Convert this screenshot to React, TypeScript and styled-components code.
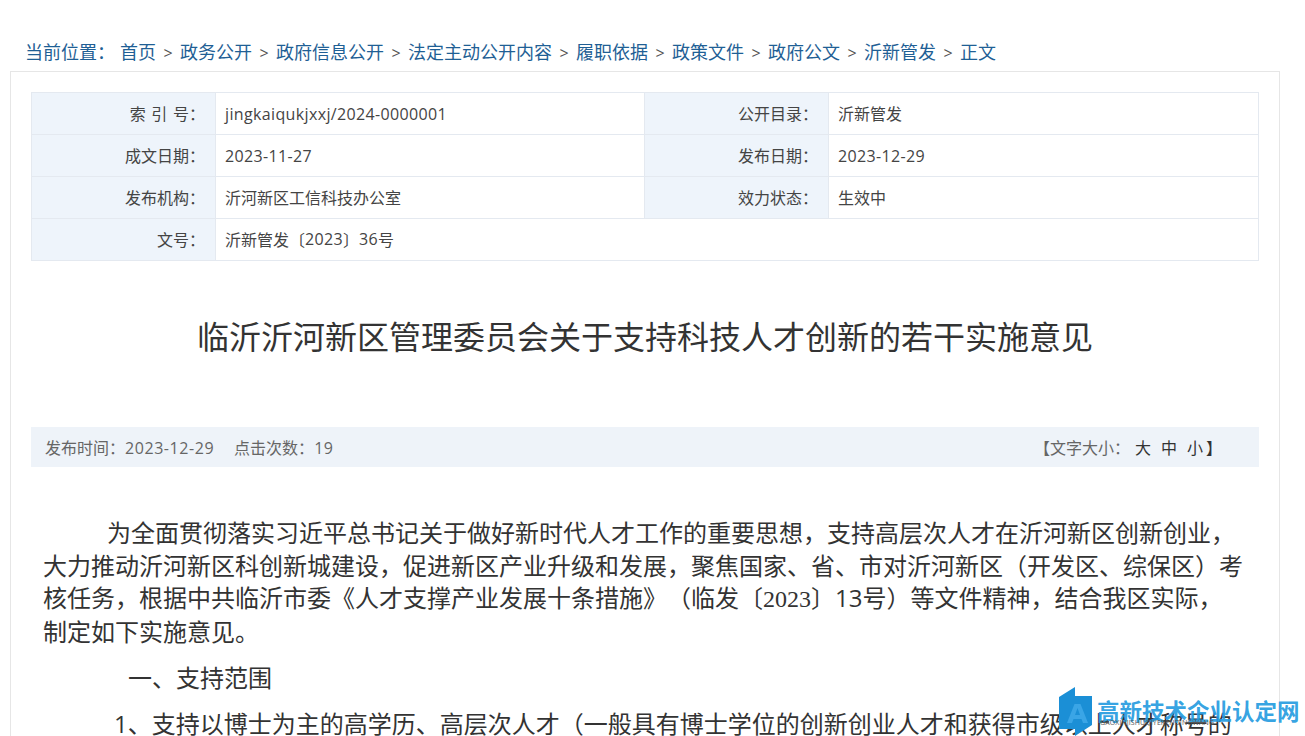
import styled, { createGlobalStyle } from "styled-components";

const cjk = `"Open Sans", "Noto Sans CJK SC", sans-serif`;

const GlobalStyle = createGlobalStyle`
  html, body {
    margin: 0;
    height: 736px;
    overflow: hidden;
    background: #fff;
  }
  body {
    font-family: ${cjk};
    color: #333;
    text-spacing-trim: space-all;
  }
`;

const Page = styled.div`
  padding: 40px 25px 0 10px;
`;

const Crumbs = styled.nav`
  display: flex;
  align-items: center;
  height: 21px;
  margin: 0 0 10px 15px;
  font-size: 18px;
  color: #1f5f95;
  white-space: nowrap;
`;

const CrumbLabel = styled.span`
  margin-right: 5px;
`;

const CrumbSep = styled.span`
  display: inline-block;
  width: 24px;
  text-align: center;
  font-size: 16px;
  color: #555;
`;

const Panel = styled.main`
  border: 1px solid #e6e6e6;
  border-bottom: 0;
  padding: 20px 20px 0;
`;

const InfoTable = styled.div`
  display: grid;
  grid-template-columns: 184px 429px 184px 1fr;
  grid-auto-rows: 42px;
  border-top: 1px solid #e4e9f0;
  border-left: 1px solid #e4e9f0;
`;

const InfoLabel = styled.div`
  display: flex;
  align-items: center;
  justify-content: flex-end;
  padding: 0 10px 2px 0;
  font-size: 16px;
  color: #444;
  background: #eef4fb;
  border-right: 1px solid #e4e9f0;
  border-bottom: 1px solid #e4e9f0;
  white-space: pre;
  word-spacing: 1.5px;
`;

const InfoValue = styled.div<{ $span?: number }>`
  display: flex;
  align-items: center;
  padding: 0 0 2px 9px;
  font-size: 16px;
  color: #444;
  grid-column: span ${(props) => props.$span ?? 1};
  border-right: 1px solid #e4e9f0;
  border-bottom: 1px solid #e4e9f0;
  white-space: pre;
`;

const LatinValue = styled(InfoValue)`
  padding-bottom: 0;
`;

const Latin = styled.span`
  letter-spacing: 0.36px;
`;

const MetaLatin = styled.span`
  letter-spacing: 0.56px;
`;

const Title = styled.h1`
  margin: 50px 0 62px;
  height: 54px;
  font-size: 32px;
  line-height: 52px;
  font-weight: 400;
  text-align: center;
  color: #333;
`;

const MetaBar = styled.div`
  display: flex;
  align-items: center;
  justify-content: space-between;
  height: 40px;
  padding: 0 37px 0 14px;
  font-size: 16px;
  color: #666;
  background: #eef3f9;
`;

const MetaGroup = styled.div`
  display: flex;
  gap: 20px;
`;

const SizeSwitch = styled.div`
  display: flex;
  align-items: center;
`;

const SizeOption = styled.span<{ $gap: number }>`
  margin-left: ${(props) => props.$gap}px;
  color: #333;
`;

const Article = styled.article`
  margin-top: 50px;
  padding: 0 15px 0 12px;
`;

const Paragraph = styled.p<{ $indent: number }>`
  margin: 0 0 13.5px;
  font-size: 24px;
  line-height: 32.5px;
  color: #333;
  text-indent: ${(props) => props.$indent}px;
`;

const SerifNum = styled.span`
  font-family: "Liberation Serif", serif;
`;

const SiteMark = styled.div`
  position: absolute;
  left: 1059px;
  top: 687px;
  width: 246px;
  height: 49px;
  overflow: hidden;
`;

const MarkIcon = styled.svg`
  position: absolute;
  left: 0;
  top: 0;
`;

const MarkName = styled.div`
  position: absolute;
  left: 38px;
  top: 12px;
  font-size: 22.5px;
  line-height: 26px;
  font-weight: 700;
  color: rgba(36, 155, 224, 0.92);
  white-space: nowrap;
`;

const MarkSub = styled.div`
  position: absolute;
  left: 41px;
  top: 32px;
  font-size: 7px;
  line-height: 8px;
  color: #555;
  letter-spacing: 0.1px;
  white-space: nowrap;
`;

const crumbs = ["首页", "政务公开", "政府信息公开", "法定主动公开内容", "履职依据", "政策文件", "政府公文", "沂新管发", "正文"];

export default function App() {
  return (
    <Page>
      <GlobalStyle />
      <Crumbs>
        <CrumbLabel>当前位置：</CrumbLabel>
        {crumbs.map((c, i) => (
          <span key={c}>
            {c}
            {i < crumbs.length - 1 && <CrumbSep>&gt;</CrumbSep>}
          </span>
        ))}
      </Crumbs>
      <Panel>
        <InfoTable>
          <InfoLabel>索 引 号：</InfoLabel>
          <LatinValue><Latin>jingkaiqukjxxj/2024-0000001</Latin></LatinValue>
          <InfoLabel>公开目录：</InfoLabel>
          <InfoValue>沂新管发</InfoValue>
          <InfoLabel>成文日期：</InfoLabel>
          <LatinValue><Latin>2023-11-27</Latin></LatinValue>
          <InfoLabel>发布日期：</InfoLabel>
          <LatinValue><Latin>2023-12-29</Latin></LatinValue>
          <InfoLabel>发布机构：</InfoLabel>
          <InfoValue>沂河新区工信科技办公室</InfoValue>
          <InfoLabel>效力状态：</InfoLabel>
          <InfoValue>生效中</InfoValue>
          <InfoLabel>文号：</InfoLabel>
          <InfoValue $span={3}>沂新管发〔<Latin>2023</Latin>〕<Latin>36</Latin>号</InfoValue>
        </InfoTable>
        <Title>临沂沂河新区管理委员会关于支持科技人才创新的若干实施意见</Title>
        <MetaBar>
          <MetaGroup>
            <span>发布时间：<MetaLatin>2023-12-29</MetaLatin></span>
            <span>点击次数：<MetaLatin>19</MetaLatin></span>
          </MetaGroup>
          <SizeSwitch>
            【文字大小：
            <SizeOption $gap={5}>大</SizeOption>
            <SizeOption $gap={10}>中</SizeOption>
            <SizeOption $gap={10}>小</SizeOption>
            <SizeOption $gap={3}>】</SizeOption>
          </SizeSwitch>
        </MetaBar>
        <Article>
          <Paragraph $indent={64}>
            为全面贯彻落实习近平总书记关于做好新时代人才工作的重要思想，支持高层次人才在沂河新区创新创业，大力推动沂河新区科创新城建设，促进新区产业升级和发展，聚焦国家、省、市对沂河新区（开发区、综保区）考核任务，根据中共临沂市委《人才支撑产业发展十条措施》（临发〔<SerifNum>2023</SerifNum>〕13号）等文件精神，结合我区实际，制定如下实施意见。
          </Paragraph>
          <Paragraph $indent={85}>一、支持范围</Paragraph>
          <Paragraph $indent={71}>
            1、支持以博士为主的高学历、高层次人才（一般具有博士学位的创新创业人才和获得市级以上人才称号的人才）
          </Paragraph>
        </Article>
      </Panel>
      <SiteMark>
        <MarkIcon width="36" height="49" viewBox="0 0 36 49">
          <path d="M0 10 L16 0 L16 9 L33 9 L33 38 L16 49 L16 42 L0 42 Z" fill="#1b8fd6" />
          <path d="M8 36 L15.5 17 L21.5 17 L29 36 L24 36 L22.5 32 L14.5 32 L13 36 Z M16 28 L21 28 L18.5 21 Z" fill="#3aa5e6" fillRule="evenodd" />
        </MarkIcon>
        <MarkName>高新技术企业认定网</MarkName>
        <MarkSub>GAOXINJISHUQIYERENDINGWANG</MarkSub>
      </SiteMark>
    </Page>
  );
}
